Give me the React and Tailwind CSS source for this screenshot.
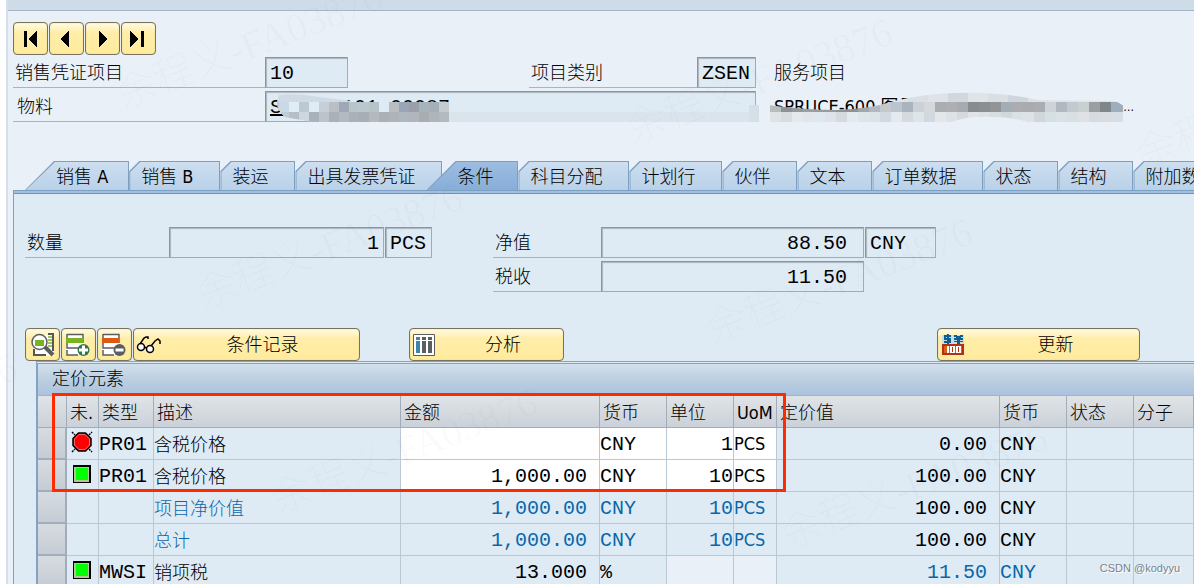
const LABEL = "font-['DejaVu_Sans_Condensed','Liberation_Sans','Noto_Sans_CJK_SC',sans-serif] text-lg/6 font-light"
const MONO = "font-['Liberation_Mono','Noto_Sans_CJK_SC',monospace] text-xl/6"
const FIELD = `${MONO} rounded-none border border-t-[#8f959b] border-l-[#8f959b] border-r-[#a5aaae] border-b-[#a5aaae] bg-[#deebf5] pt-0.5 shadow-[inset_1px_1px_1px_#aab4bd] outline-none`
const BTN =
  'flex h-[33px] shrink-0 items-center rounded-sm border border-[#77735f] bg-gradient-to-b from-[#fffbe3] from-0% via-[#ffeeaa] via-30% to-[#ffeb9c] shadow-[inset_0_0_1px_#cdb75e]'

const tabs = [
  { name: '销售 A', wide: true },
  { name: '销售 B' },
  { name: '装运' },
  { name: '出具发票凭证' },
  { name: '条件', wide: true, active: true },
  { name: '科目分配' },
  { name: '计划行' },
  { name: '伙伴' },
  { name: '文本' },
  { name: '订单数据' },
  { name: '状态' },
  { name: '结构' },
  { name: '附加数据 A' },
]

const headers = ['', '未.', '类型', '描述', '金额', '货币', '单位', 'UoM', '定价值', '货币', '状态', '分子']

const rows = [
  { light: 'red', type: 'PR01', desc: '含税价格', amount: '', cur: 'CNY', per: '1', uom: 'PCS', value: '0.00', editable: true },
  { light: 'green', type: 'PR01', desc: '含税价格', amount: '1,000.00', cur: 'CNY', per: '10', uom: 'PCS', value: '100.00', editable: true },
  { desc: '项目净价值', amount: '1,000.00', cur: 'CNY', per: '10', uom: 'PCS', value: '100.00', subtotal: true },
  { desc: '总计', amount: '1,000.00', cur: 'CNY', per: '10', uom: 'PCS', value: '100.00', subtotal: true },
  { light: 'green', type: 'MWSI', desc: '销项税', amount: '13.000', cur: '%', per: '', uom: '', value: '11.50', blueValue: true },
]

const navIcons = [
  { label: '第一个项目', d: 'M4 3h3v16H4zM17 3v16L8 11z' },
  { label: '上一个项目', d: 'M13 3v16L4 11z' },
  { label: '下一个项目', d: 'M7 3v16l9-8z' },
  { label: '最后一个项目', d: 'M2 3v16l9-8zM13 3h3v16h-3z' },
]

function FieldLabel({ htmlFor, className, children }) {
  return (
    <label htmlFor={htmlFor} className={`${LABEL} flex items-center border-b border-[#adb3b8] pt-0.5 ${className}`}>
      {children}
    </label>
  )
}

function Tab({ name, wide, active }) {
  const shape = wide
    ? '[clip-path:polygon(29px_0,100%_0,100%_100%,0_100%)]'
    : '[clip-path:polygon(10px_0,100%_0,100%_100%,0_100%,0_10px)]'
  let pad = 'pl-[11px] pr-[26px]'
  if (wide) pad = active ? 'pl-[30px] pr-6' : 'pl-[30px] pr-5'
  const fill = active ? 'from-[#9dbde0] to-[#87add9]' : 'from-[#cddff0] to-[#b9d1e8]'
  return (
    <button
      type="button"
      role="tab"
      aria-selected={!!active}
      className={`h-[29px] shrink-0 bg-[#7f9fc0] px-px pt-px ${shape} ${active ? 'relative -ml-4' : ''}`}
    >
      <span className={`${LABEL} flex h-7 items-center whitespace-nowrap bg-gradient-to-b pt-0.5 ${fill} ${pad} ${shape}`}>
        {name}
      </span>
    </button>
  )
}

function DetailIcon() {
  return (
    <svg width="24" height="24" viewBox="0 0 24 24" aria-hidden="true">
      <path d="M3 2h20v21H3z" fill="#fff" />
      <path d="M17 1h5v17M3 16v6h12" fill="none" stroke="#55585b" strokeWidth="2" />
      <path d="M17 4h4M17 7h4M17 10h4M17 13h4" stroke="#78b41e" strokeWidth="1.5" />
      <circle cx="8.500" cy="9" r="7.500" fill="#fff" stroke="#5b5e60" strokeWidth="1.500" />
      <path d="M4 7h9v6H4z" fill="#78b41e" />
      <path d="m14 14 8 8" stroke="#5b5e60" strokeWidth="4" />
    </svg>
  )
}

function RowIcon({ color, minus }) {
  return (
    <svg width="25" height="24" viewBox="0 0 25 24" aria-hidden="true">
      <path d="M0 1h18v21H0z" fill="#fff" />
      <path d="M1 1.500h16V10M1 1v5M1 10v5h12M1 17v5h11" fill="none" stroke="#5b5e60" strokeWidth="1.500" />
      <path d="M0 5h17v5H0z" fill={color} />
      <circle cx="17.500" cy="17" r="6" fill={minus ? '#5b5e60' : '#2f7648'} />
      {minus ? (
        <path d="M13.500 15.500h8v3h-8z" fill="#fff" />
      ) : (
        <path d="M16 12.500h3v3h3v3h-3v3h-3v-3h-3v-3h3z" fill="#fff" />
      )}
    </svg>
  )
}

function GlassesIcon() {
  return (
    <svg width="26" height="20" viewBox="0 0 26 20" fill="none" stroke="#000" strokeWidth="1.500" aria-hidden="true">
      <path d="M4 9 8 3l2-1h2v2M15 11l4-5 3-2 2 2v3M8 12l3 1" />
      <circle cx="5" cy="12" r="3.500" fill="#fff" />
      <circle cx="14" cy="14" r="3.500" fill="#fff" />
    </svg>
  )
}

function ColumnsIcon() {
  return (
    <svg width="22" height="22" viewBox="0 0 22 22" aria-hidden="true">
      <path d="M.5.5h21v21H.5z" fill="#fff" stroke="#5b5e60" />
      <path d="M3 3h4v3H3zM3 7h4v12H3z" fill="#3d84b0" />
      <path d="M9 3h4v3H9zM9 7h4v12H9zM15 3h4v3h-4zM15 7h4v12h-4z" fill="#5b5e60" />
    </svg>
  )
}

function PriceIcon() {
  return (
    <svg width="22" height="22" viewBox="0 0 22 22" shapeRendering="crispEdges" aria-hidden="true">
      <path d="M0 1h22v9H0z" fill="#cfdbe2" />
      <path d="M2 1h7v2H2zM2 4h7v2H2zM2 7h7v2H2zM5 0h2v10H5zM2 1h2v5H2zM7 4h2v5H7z" fill="#0c5f94" />
      <path d="M12 1h3v2h-3zM18 1h3v2h-3zM14 2h5v2h-5zM12 4h9v2h-9zM12 7h9v1h-9zM15 3h3v7h-3z" fill="#0c5f94" />
      <path d="M0 10h22v11H0z" fill="#b5300c" />
      <path d="M2 12h18v7H2z" fill="#dd5a18" />
      <path d="M5 12h2v7H5zM8 12h5v7H8zM14 12h5v7h-5z" fill="#fff" />
      <path d="M10 13h1v5h-1zM16 13h1v5h-1z" fill="#b5300c" />
    </svg>
  )
}

function Light({ color }) {
  if (color === 'red') {
    return (
      <svg width="22" height="22" viewBox="0 0 22 22" role="img" aria-label="未激活" className="mx-auto">
        <path d="m1 1 3 3m14 0 3-3M1 21l3-3m14 0 3 3" stroke="#000" strokeWidth="1.500" strokeDasharray="2 1" />
        <path d="M7.500 2h7L20 7.500v7L14.500 20h-7L2 14.500v-7z" fill="#f00" stroke="#000" strokeWidth="1.500" />
        <path d="M8 3.500h6l4.500 4.500v6L14 18.500H8L3.500 14V8z" fill="none" stroke="#ee6d6d" />
      </svg>
    )
  }
  return (
    <svg width="18" height="18" viewBox="0 0 18 18" role="img" aria-label="激活" className="mx-auto">
      <path d="M0 0h18v18H0z" />
      <path d="M1 2h15v15H1z" fill="#b5c894" />
      <path d="M3 3h12v12H3z" fill="#0f0" />
    </svg>
  )
}

function MaterialMosaic() {
  const top = ['#c2c9d0', '#c8d9ea', '#dfedf7', '#bdc9d2', '#e0ecf5', '#c5cfd8', '#b9bfc4', '#9ea8b7', '#b8c6cc', '#bcc7cb', '#b8c2c9']
  const right = ['#b9bec1', '#9aa6b8', '#9a9fa8', '#a8b2ba', '#a5afb8', '#c3cbd2']
  const low = ['#bcc3ca', '#a9b1ba', '#b4bac0', '#abb1b8', '#a9aeb5', '#b3b9bf', '#abb0b6', '#adb3b9', '#b0b8bf', '#b0b6bc', '#a8adb2', '#aeb5bb', '#b4bac0']
  return (
    <svg width="495" height="31" viewBox="0 0 495 31" className="absolute top-0 left-0" aria-hidden="true">
      <defs>
        <clipPath id="smudge">
          <path d="M14 4q16-2 40 2l32 4v22H54L20 26Q8 16 14 4z" />
        </clipPath>
      </defs>
      <g clipPath="url(#smudge)">
        <path d="M4 2h84v29H4z" fill="#cfdae4" />
        {top.map((c, i) => <rect key={i} x={4 + i * 10} y="11" width="10" height="10" fill={c} />)}
        {['#bfcbd5', '#b6bdc4', '#cdd7df', '#a9b1ba'].map((c, i) => (
          <rect key={i} x={14 + i * 10} y="21" width="10" height="10" fill={c} />
        ))}
      </g>
      {top.slice(8).map((c, i) => <rect key={i} x={84 + i * 10} y="11" width="10" height="10" fill={c} />)}
      {right.map((c, i) => <rect key={i} x={124 + i * 10} y="11" width="10" height="10" fill={c} />)}
      {low.map((c, i) => <rect key={i} x={54 + i * 10} y="21" width="10" height="10" fill={c} />)}
      <path d="M184 21h300v10H184z" fill="#d9e4ed" />
      <path d="M484 14h10v17h-10z" fill="#d4dfe8" />
    </svg>
  )
}

function TextMosaic() {
  const top = ['#b9bcbe', '#8e9294', '#969a9c', '#9b9fa1', '#999c9e', '#999c9e', '#909496', '#8e9294', '#a3a7aa', '#b2b7c1', '#c4c9cb', '#bbc3cc', '#aab4be', '#cbd1d4', '#d5d9db', '#aaadb1', '#adafb3', '#a7aaae', '#878c8e', '#8b8f91', '#919596', '#a3adb5', '#abadb0', '#a9abae', '#aaadb1', '#cdd3d8', '#b2b8c0', '#c3cacf', '#c8d1d2', '#9c9fa1', '#80878a', '#9faebc']
  const low = ['#dfe3e6', '#d7dde1', '#e5e9ec', '#e2e6ea', '#dfe7ef', '#dee3e9', '#d4dadd', '#e5eaee', '#dfe6e9', '#dce4e8', '#d1d9e1', '#e3e9ec', '#d4dae0', '#dfe5e7', '#d1d8e0', '#e3e7e9', '#dce2e5', '#d4dade', '#e2e5e8', '#dce1e3', '#d8dddf', '#d1d8dd', '#dbe0e5', '#dde2e6', '#d0d6d9', '#d5e0e5', '#dbe1e4', '#d9e0e4', '#dee2e5', '#d7dbdf', '#d9dde2', '#d7dee5']
  const cap = ['#dfe4e8', '#d8dfe5', '#dde3e8', '#d0d7df', '#dfe4e6', '#d9dfe3', '#ced5dd', '#dce1e5']
  return (
    <svg width="360" height="31" viewBox="0 0 360 31" className="absolute top-0 -left-1.5" aria-hidden="true">
      <defs>
        <clipPath id="scribble">
          <path d="M0 14q36 5 70 5 32-1 56-9 36-8 62-8 40-2 82 7l76 1q14 4 13 14 0 7-6 7H260q-16-5-36-5-26-1-40 5H0z" />
        </clipPath>
      </defs>
      <g clipPath="url(#scribble)">
        {cap.map((c, i) => <rect key={i} x={120 + i * 20} y="1" width="20" height="11" fill={c} />)}
        <path d="M280 8h80v4h-80z" fill="#dfe4e8" />
        {top.map((c, i) => <rect key={i} x={i * 11 + 2} y="11" width="12" height="10" fill={c} />)}
        {low.map((c, i) => <rect key={i} x={i * 11 + 2} y="21" width="12" height="10" fill={c} />)}
      </g>
    </svg>
  )
}

function Watermark({ className }) {
  return (
    <span
      aria-hidden="true"
      className={`pointer-events-none absolute origin-bottom-left -rotate-[21deg] font-['Liberation_Serif','Noto_Sans_CJK_SC',serif] text-[40px]/10 font-light whitespace-nowrap text-[#5a6478]/3 ${className}`}
    >
      余程义-FA03876
    </span>
  )
}

function ConditionRow({ row }) {
  const text = row.subtotal ? 'text-[#0b66a8]' : 'text-black'
  const cell = 'h-8 overflow-hidden border-r border-b border-[#bac7d5] p-0 whitespace-nowrap'
  const mono = `${cell} ${MONO} pt-[3px]`
  const entry = row.editable ? 'bg-white' : ''
  const blank = row.per ? entry : 'bg-[#e9f0f7]'
  const valueText = row.blueValue ? 'text-[#0b66a8]' : 'text-black'
  return (
    <tr className={text}>
      <td className="h-8 border-r-2 border-b-2 border-[#a3adb9] bg-gradient-to-b from-[#d7dce1] to-[#c5ccd5] p-0" />
      <td className={`${cell} pr-0.5 pb-1`}>{row.light && <Light color={row.light} />}</td>
      <td className={mono}>{row.type}</td>
      <td className={`${cell} ${LABEL} pt-0.5`}>{row.desc}</td>
      <td className={`${mono} ${entry} pr-3 text-right`}>{row.amount}</td>
      <td className={`${mono} ${entry}`}>{row.cur}</td>
      <td className={`${mono} ${blank} text-right`}>{row.per}</td>
      <td className={`${cell} ${LABEL} ${blank}`}>{row.uom}</td>
      <td className={`${mono} ${valueText} pr-3 text-right`}>{row.value}</td>
      <td className={`${mono} ${valueText}`}>CNY</td>
      <td className={cell} />
      <td className={cell} />
    </tr>
  )
}

export default function App() {
  return (
    <div className="relative h-screen overflow-hidden bg-white pl-1.5 text-black">
      <div className="min-h-full border-l-2 border-[#d5dee9] bg-[#e9f0f7]">
        <div className="h-[11px] border-b border-[#a3b6c8] bg-[#cedce7]" />

        <div className="pt-[11px] pl-[5px]">
          <div className="flex gap-px">
            {navIcons.map((icon) => (
              <button key={icon.label} type="button" aria-label={icon.label} className={`${BTN} w-[35px] justify-center`}>
                <svg width="22" height="22" viewBox="0 0 22 22" shapeRendering="crispEdges" aria-hidden="true">
                  <path d={icon.d} />
                </svg>
              </button>
            ))}
          </div>

          <div className="mt-0.5 flex h-[31px]">
            <FieldLabel htmlFor="item" className="w-[252px] pl-0.5">销售凭证项目</FieldLabel>
            <input id="item" readOnly defaultValue="10" className={`${FIELD} w-[83px] pl-1`} />
            <FieldLabel htmlFor="category" className="ml-[181px] w-[168px] pl-0.5">项目类别</FieldLabel>
            <input id="category" readOnly defaultValue="ZSEN" className={`${FIELD} w-[59px] pl-1`} />
            <span className={`${LABEL} ml-[18px] self-center`}>服务项目</span>
          </div>

          <div className="mt-[3px] flex h-[31px]">
            <FieldLabel htmlFor="material" className="w-[252px] pl-1">物料</FieldLabel>
            <div className="relative flex w-[491px]">
              <input id="material" readOnly defaultValue="S     101 00087" className={`${FIELD} w-full pl-1 underline`} />
              <MaterialMosaic />
            </div>
            <div className="relative ml-[18px] flex w-[360px] items-center justify-between font-['DejaVu_Sans_Condensed','Noto_Sans','Noto_Sans_CJK_SC',sans-serif] text-lg/6 whitespace-nowrap">
              <span>SPRUCE-600 图号</span>
              <span className="text-xs">…</span>
              <TextMosaic />
            </div>
          </div>
        </div>

        <div role="tablist" className="mt-[39px] flex overflow-hidden pl-[17px]">
          {tabs.map((tab) => <Tab key={tab.name} {...tab} />)}
        </div>

        <div className="ml-[5px] border-t border-l border-[#7c9fc4] bg-[#deebf5]">
          <div className="h-[3px] border-b border-[#6e93bb] bg-[#9fc0e2]" />

          <div className="pt-[33px] pl-[11px]">
            <div className="flex h-[31px]">
              <FieldLabel htmlFor="quantity" className="w-36 pl-0.5">数量</FieldLabel>
              <input id="quantity" readOnly defaultValue="1" className={`${FIELD} w-[215px] pr-1 text-right`} />
              <input aria-label="数量单位" readOnly defaultValue="PCS" className={`${FIELD} ml-px w-[47px] pl-1`} />
              <FieldLabel htmlFor="net" className="ml-[61px] w-[108px] pl-0.5">净值</FieldLabel>
              <input id="net" readOnly defaultValue="88.50" className={`${FIELD} w-[263px] pr-4 text-right`} />
              <input aria-label="货币" readOnly defaultValue="CNY" className={`${FIELD} ml-px w-[71px] pl-1`} />
            </div>
            <div className="mt-[3px] flex h-[31px] pl-[468px]">
              <FieldLabel htmlFor="tax" className="w-[108px] pl-0.5">税收</FieldLabel>
              <input id="tax" readOnly defaultValue="11.50" className={`${FIELD} w-[263px] pr-4 text-right`} />
            </div>

            <div className="mt-9 flex gap-px">
              <button type="button" aria-label="明细" className={`${BTN} w-[35px] justify-center`}><DetailIcon /></button>
              <button type="button" aria-label="插入行" className={`${BTN} w-[35px] justify-center`}><RowIcon color="#78b41e" /></button>
              <button type="button" aria-label="删除行" className={`${BTN} w-[35px] justify-center`}><RowIcon color="#dc5a14" minus /></button>
              <button type="button" className={`${BTN} ${LABEL} w-[227px] pl-0.5`}>
                <GlassesIcon />
                <span className="flex-1 pl-1">条件记录</span>
              </button>
              <button type="button" className={`${BTN} ${LABEL} ml-12 w-[155px] pl-[3px]`}>
                <ColumnsIcon />
                <span className="flex-1 pl-2">分析</span>
              </button>
              <button type="button" className={`${BTN} ${LABEL} ml-[372px] w-[203px] pl-1`}>
                <PriceIcon />
                <span className="flex-1 pl-2">更新</span>
              </button>
            </div>

            <div className="ml-[11px] border-t border-l border-[#84a3c4] pt-px">
              <div className="relative border-t border-l border-[#84a3c4]">
                <h2 className={`${LABEL} flex h-8 items-center border-b border-[#9db4cb] bg-gradient-to-b from-[#d2e0ed] via-[#bccfe0] to-[#abc3df] pb-0.5 pl-3.5`}>
                  定价元素
                </h2>
                <table className="w-full table-fixed border-separate border-spacing-0">
                  <colgroup>
                    <col className="w-[29px]" />
                    <col className="w-8" />
                    <col className="w-[55px]" />
                    <col className="w-[247px]" />
                    <col className="w-[199px]" />
                    <col className="w-[67px]" />
                    <col className="w-[67px]" />
                    <col className="w-[43px]" />
                    <col className="w-[223px]" />
                    <col className="w-[67px]" />
                    <col className="w-[67px]" />
                    <col />
                  </colgroup>
                  <thead>
                    <tr>
                      {headers.map((h, i) => (
                        <th
                          key={i}
                          className={`${LABEL} h-8 overflow-hidden border-r border-b border-[#a3adb9] bg-gradient-to-b from-[#e0e4e7] to-[#cbd1d9] p-0 pt-0.5 pl-[3px] text-left whitespace-nowrap`}
                        >
                          {h}
                        </th>
                      ))}
                    </tr>
                  </thead>
                  <tbody>
                    {rows.map((row, i) => <ConditionRow key={i} row={row} />)}
                  </tbody>
                </table>
                {/* highlight around the two PR01 lines */}
                <div className="pointer-events-none absolute top-[29px] left-3.5 h-[99px] w-[734px] border-3 border-[#ff2a00]" />
              </div>
            </div>
          </div>
        </div>
      </div>

      <Watermark className="top-[75px] left-[125px]" />
      <Watermark className="top-[110px] left-[635px]" />
      <Watermark className="top-[135px] left-[1145px]" />
      <Watermark className="top-[275px] left-[205px]" />
      <Watermark className="top-[310px] left-[715px]" />
      <Watermark className="top-[445px] left-[-240px]" />
      <Watermark className="top-[480px] left-[280px]" />
      <Watermark className="top-[515px] left-[790px]" />
      <span className="absolute right-3.5 bottom-2 font-['Liberation_Sans',sans-serif] text-[11px]/4 text-[#7b8187] [text-shadow:1px_1px_0_#fff]">
        CSDN @kodyyu
      </span>
    </div>
  )
}
